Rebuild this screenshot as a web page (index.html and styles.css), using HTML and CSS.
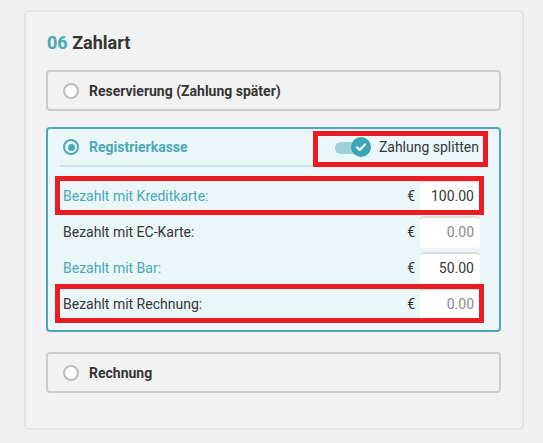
FILE: index.html
```html
<!DOCTYPE html>
<html lang="de">
<head>
<meta charset="utf-8">
<title>Zahlart</title>
<link rel="stylesheet" href="styles.css">
</head>
<body>
<section class="card">
  <h2 class="title"><span class="num">06</span> Zahlart</h2>

  <div class="option">
    <span class="radio"></span>
    <span class="option-label">Reservierung (Zahlung später)</span>
  </div>

  <div class="option option-active">
    <div class="head">
      <span class="radio radio-on"></span>
      <span class="option-label">Registrierkasse</span>
      <div class="split">
        <span class="toggle">
          <span class="track"></span>
          <span class="knob">
            <svg viewBox="0 0 20 20" width="20" height="20"><path d="M6 10.3l2.7 2.6 5.3-5.4" fill="none" stroke="#fff" stroke-width="2.2" stroke-linecap="round" stroke-linejoin="round"/></svg>
          </span>
        </span>
        <span class="split-label">Zahlung splitten</span>
      </div>
      <span class="mark mark-split"></span>
    </div>
    <div class="rows">
      <div class="row">
        <span class="row-label teal">Bezahlt mit Kreditkarte:</span>
        <span class="euro">€</span>
        <span class="amount">100.00</span>
        <span class="mark mark-row"></span>
      </div>
      <div class="row">
        <span class="row-label">Bezahlt mit EC-Karte:</span>
        <span class="euro">€</span>
        <span class="amount empty">0.00</span>
      </div>
      <div class="row">
        <span class="row-label teal">Bezahlt mit Bar:</span>
        <span class="euro">€</span>
        <span class="amount">50.00</span>
      </div>
      <div class="row">
        <span class="row-label">Bezahlt mit Rechnung:</span>
        <span class="euro">€</span>
        <span class="amount empty">0.00</span>
        <span class="mark mark-row"></span>
      </div>
    </div>
  </div>

  <div class="option option-last">
    <span class="radio"></span>
    <span class="option-label">Rechnung</span>
  </div>
</section>
</body>
</html>
```

FILE: styles.css
```css
* { box-sizing: border-box; }
html, body { margin: 0; padding: 0; }
body {
  background: #f0f0f0;
  font-family: Roboto, "Liberation Sans", Arial, sans-serif;
  color: #3a3a3a;
}
.card {
  margin: 10px 0 0 24px;
  width: 500px;
  height: 420px;
  border: 2px solid #e2e2e2;
  border-radius: 5px;
  background: #f2f2f2;
  padding: 20px 21px 0 20px;
}
.title {
  margin: 0 0 17px 1px;
  font-size: 18px;
  line-height: 21px;
  font-weight: 700;
  color: #363636;
}
.num { color: #47a9b8; }

.option {
  display: flex;
  align-items: center;
  height: 41px;
  border: 2px solid #cbcbcb;
  border-radius: 4px;
  padding-left: 15px;
}
.option-label {
  margin-left: 10px;
  font-size: 14px;
  font-weight: 700;
  color: #363636;
}
.radio {
  width: 16px;
  height: 16px;
  border-radius: 50%;
  border: 2px solid #bdbdbd;
  background: #fff;
  flex: none;
}
.radio-on {
  border-color: #49a9b7;
  background: #eaf6f8;
  display: flex;
  align-items: center;
  justify-content: center;
}
.radio-on::before {
  content: "";
  width: 7px;
  height: 7px;
  border-radius: 50%;
  background: #49a9b7;
}

.option-active {
  display: block;
  height: auto;
  margin-top: 16px;
  border-color: #49a9b7;
  background: #eaf6f8;
  padding: 0 11px 10px 12px;
}
.option-active .option-label { color: #49a9b7; }
.head {
  position: relative;
  display: flex;
  align-items: center;
  height: 38px;
  padding: 0 9px 0 3px;
  border-bottom: 2px solid #c6e5eb;
}
.split {
  margin-left: auto;
  display: flex;
  align-items: center;
}
.toggle {
  position: relative;
  width: 36px;
  height: 20px;
  margin-right: 8px;
}
.track {
  position: absolute;
  left: 0;
  top: 5px;
  width: 28px;
  height: 12px;
  border-radius: 6px;
  background: #9dd0d9;
}
.knob {
  position: absolute;
  right: 0;
  top: 0;
  width: 20px;
  height: 20px;
  border-radius: 50%;
  background: #39a5b5;
}
.knob svg { display: block; }
.split-label {
  font-size: 14px;
  color: #363636;
}

.mark {
  position: absolute;
  border: 5px solid #ec1c24;
  pointer-events: none;
}
.mark-split {
  top: 2px;
  bottom: -2px;
  left: 253px;
  right: 0;
}

.rows {
  display: flex;
  flex-direction: column;
  gap: 4px;
  padding: 13px 8px 0 3px;
}
.row {
  position: relative;
  display: flex;
  align-items: center;
  height: 32px;
}
.row-label {
  flex: 1;
  font-size: 14px;
  color: #363636;
}
.row-label.teal { color: #49a9b7; }
.euro {
  font-size: 14px;
  color: #363636;
  margin-right: 5px;
}
.amount {
  width: 60px;
  height: 32px;
  background: #fff;
  border-top: 2px solid #dcdcdc;
  border-radius: 4px;
  padding-right: 6px;
  font-size: 14px;
  line-height: 29px;
  text-align: right;
  color: #363636;
}
.amount.empty { color: #8a8a8a; }
.mark-row {
  top: -4px;
  bottom: -3px;
  left: -8px;
  right: -4px;
}

.option-last { margin-top: 20px; }
```
